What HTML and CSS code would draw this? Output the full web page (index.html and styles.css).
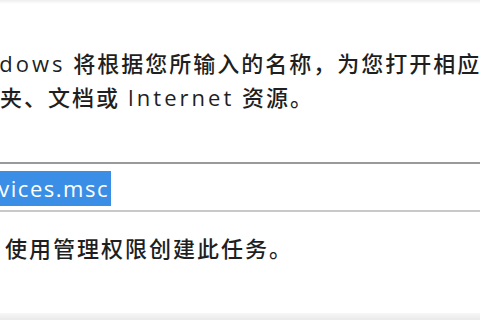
FILE: index.html
```html
<!DOCTYPE html>
<html lang="zh-CN">
<head>
<meta charset="utf-8">
<title>运行</title>
<link rel="stylesheet" href="styles.css">
</head>
<body>
<div class="page">
  <div class="desc">
    <div class="line line1"><span class="lat">Windows</span> 将根据您所输入的名称，为您打开相应的程序、</div>
    <div class="line line2">文件夹、文档或 <span class="lat">Internet</span> 资源。</div>
  </div>
  <div class="field">
    <span class="sel">services.msc</span>
  </div>
  <div class="line line3">使用管理权限创建此任务。</div>
  <div class="spacer"></div>
  <div class="footer"></div>
</div>
</body>
</html>
```

FILE: styles.css
```css
html, body {
  margin: 0;
  padding: 0;
  background: #ffffff;
}
.page {
  width: 480px;
  height: 320px;
  overflow: hidden;
  display: flex;
  flex-direction: column;
  background: linear-gradient(#ededed 0, #ffffff 4px);
  font-family: "Open Sans", "Noto Sans CJK SC", sans-serif;
  color: #1f1f1f;
}
.desc {
  padding-top: 46px;
}
.line {
  white-space: nowrap;
  font-size: 22px;
  line-height: 34px;
  letter-spacing: 2px;
  font-weight: 500;
}
.lat {
  letter-spacing: 3px;
}
.line1 {
  margin-left: -49px;
}
.line2 {
  margin-left: -48px;
}
.field {
  margin-top: 48px;
  height: 46px;
  border-top: 2px solid #999999;
  border-bottom: 2px solid #c9c9c9;
  background: #ffffff;
  display: flex;
  align-items: center;
  overflow: hidden;
}
.sel {
  margin-left: -38px;
  margin-top: 2px;
  height: 35px;
  line-height: 35px;
  padding-right: 2px;
  background: #3a8ee6;
  color: #ffffff;
  font-size: 22px;
  letter-spacing: 1.5px;
  white-space: nowrap;
}
.line3 {
  margin-top: 19px;
  margin-left: 5px;
}
.spacer {
  flex: 1;
}
.footer {
  height: 7px;
  background: linear-gradient(#f7f7f7, #e9e9e9);
}
```
